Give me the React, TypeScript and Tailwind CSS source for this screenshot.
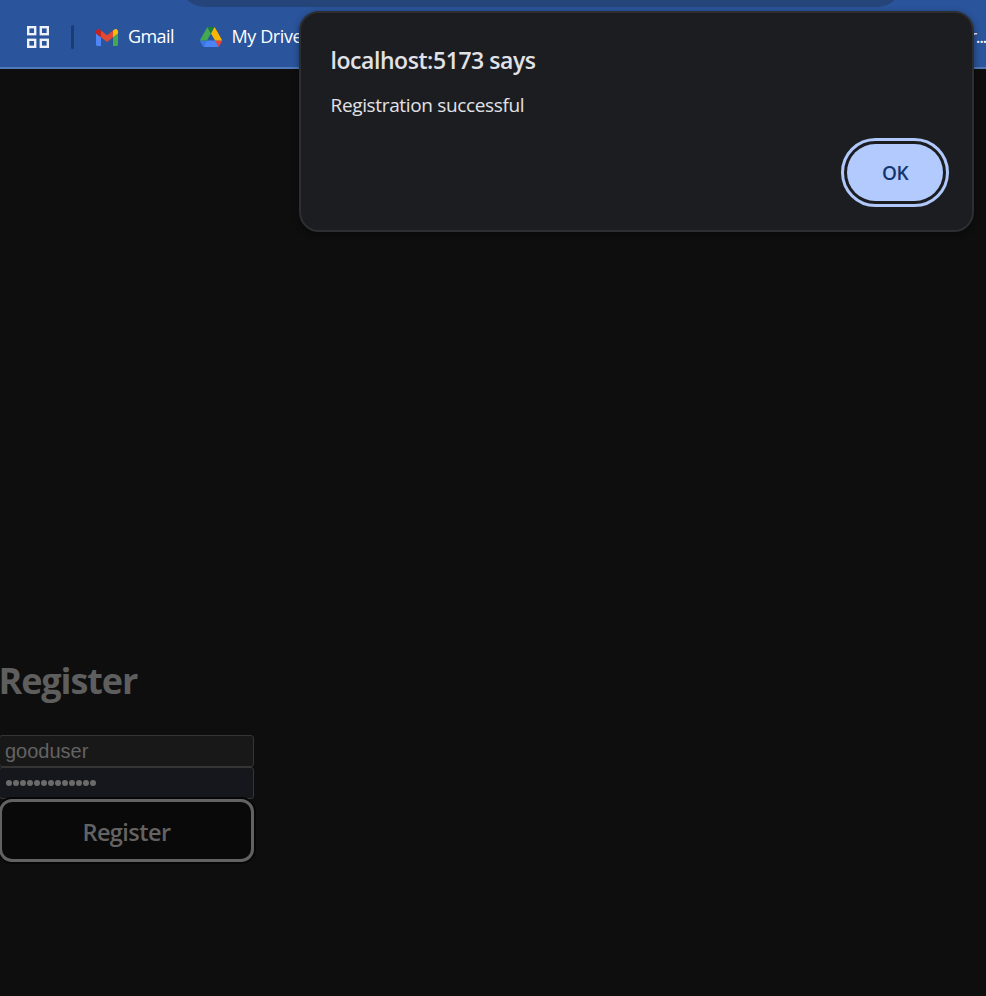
import React from "react";

function AppsIcon() {
  return (
    <svg width="22" height="22" viewBox="0 0 22 22" fill="none" stroke="#eef1f8" strokeWidth="2.4">
      <rect x="1.2" y="1.2" width="7" height="7" />
      <rect x="13.8" y="1.2" width="7" height="7" />
      <rect x="1.2" y="13.8" width="7" height="7" />
      <rect x="13.8" y="13.8" width="7" height="7" />
    </svg>
  );
}

function GmailIcon() {
  return (
    <svg width="22" height="17" viewBox="52 42 88 66" preserveAspectRatio="none">
      <path fill="#4f86f5" d="M58 108h14V74L52 59v43c0 3.32 2.69 6 6 6" />
      <path fill="#43a852" d="M120 108h14c3.32 0 6-2.69 6-6V59l-20 15" />
      <path fill="#fbbc04" d="M120 48v26l20-15v-8c0-7.42-8.47-11.65-14.4-7.2" />
      <path fill="#e04a35" d="M72 74V48l24 18 24-18v26L96 92" />
      <path fill="#c5221f" d="M52 51v8l20 15V48l-5.600-4.200c-5.940-4.450-14.400-.22-14.400 7.200" />
    </svg>
  );
}

function DriveIcon() {
  return (
    <svg width="22" height="20" viewBox="0 0 87.3 78" preserveAspectRatio="none">
      <path fill="#3878e8" d="m6.600 66.850 3.850 6.650c.8 1.400 1.950 2.500 3.300 3.300l13.750-23.800h-27.500c0 1.550.4 3.100 1.200 4.500z" />
      <path fill="#43a852" d="m43.650 25-13.750-23.800c-1.350.8-2.500 1.900-3.300 3.300l-25.400 44a9.060 9.060 0 0 0 -1.200 4.500h27.500z" />
      <path fill="#ea4335" d="m73.550 76.800c1.350-.8 2.500-1.900 3.300-3.300l1.600-2.750 7.650-13.250c.8-1.400 1.200-2.950 1.200-4.500h-27.502l5.852 11.500z" />
      <path fill="#188038" d="m43.650 25 13.750-23.800c-1.350-.8-2.900-1.200-4.500-1.200h-18.500c-1.600 0-3.150.45-4.500 1.200z" />
      <path fill="#4b84f5" d="m59.800 53h-32.300l-13.750 23.800c1.350.8 2.900 1.200 4.500 1.200h50.800c1.600 0 3.150-.45 4.500-1.200z" />
      <path fill="#fbb604" d="m73.400 26.500-12.700-22c-.8-1.400-1.950-2.500-3.300-3.300l-13.750 23.800 16.150 28h27.450c0-1.550-.4-3.100-1.200-4.500z" />
    </svg>
  );
}

function BookmarksBar() {
  return (
    <header className="relative h-[69px] overflow-hidden border-b-2 border-[#4f78b8] bg-[#2a549b]">
      <div className="absolute -top-[45px] left-[179px] h-[52px] w-[724px] rounded-full bg-[#254479]" />
      <div className="flex h-[74px] items-center pl-[27px] text-[18px] text-white">
        <AppsIcon />
        <div className="ml-[22px] h-6 w-[3px] rounded-full bg-[#1d3b70]" />
        <div className="ml-[22px] flex items-center">
          <GmailIcon />
          <span className="ml-[10px] w-[72px] whitespace-nowrap pb-[2px] tracking-[-0.6px]">Gmail</span>
        </div>
        <div className="flex items-center">
          <DriveIcon />
          <span className="ml-[9.5px] whitespace-nowrap pb-[2px] tracking-[-0.4px]">My Drive</span>
        </div>
        <span className="ml-auto whitespace-nowrap pb-[2px] tracking-[-1.3px]">r...</span>
      </div>
    </header>
  );
}

function AlertDialog() {
  return (
    <section
      role="alertdialog"
      className="absolute left-[299px] top-[11px] flex h-[221px] w-[675px] flex-col rounded-[20px] border-2 border-[#2d2e32] bg-[#1c1d20] pl-[29.5px] pr-[23px] text-[#e1e2e8] shadow-[0_2px_6px_rgba(0,0,0,0.4)]"
    >
      <h2 className="mt-[31px] whitespace-nowrap text-[23px] font-semibold leading-8 tracking-[-0.44px]">
        localhost:5173 says
      </h2>
      <p className="mt-[15px] whitespace-nowrap text-[19px] leading-7 tracking-[-0.35px]">Registration successful</p>
      <button className="mt-[19px] flex h-[69px] w-[108px] items-center justify-center self-end rounded-full border-[3px] border-[#b0c8fb] p-[3px]">
        <span className="flex h-full w-full items-center justify-center rounded-full bg-[#b2cafd] pt-px text-[19px] font-semibold tracking-[-0.6px] text-[#12366f]">
          OK
        </span>
      </button>
    </section>
  );
}

export default function App() {
  return (
    <div className="relative h-[996px] w-[986px] overflow-hidden bg-[#0e0e0e] font-['Open_Sans','Noto_Sans',sans-serif]">
      <BookmarksBar />
      <main className="pt-[587px] text-[#636363]">
        <h1 className="-ml-[1.5px] h-[79px] whitespace-nowrap text-[36px] font-bold leading-[50px] tracking-[-1.1px] text-[#5e5e5e]">
          Register
        </h1>
        <form className="-ml-px flex w-[255px] flex-col">
          <div className="flex h-8 items-center rounded-[3px] border border-[#353535] bg-[#181818] px-[5px] font-['Liberation_Sans',sans-serif] text-[20px]">
            gooduser
          </div>
          <div className="flex h-8 items-center gap-px rounded-[3px] border border-[#353535] bg-[#16171c] pb-px pl-[6px]">
            {Array.from({ length: 13 }, (_, i) => (
              <span key={i} className="size-[6px] rounded-full bg-[#6b6b6b]" />
            ))}
          </div>
          <div className="flex h-[63px] items-center justify-center rounded-[13px] border-[3px] border-[#626262] bg-[#090909] pt-[4px] text-[23.5px] font-semibold tracking-[-0.55px] shadow-[0_0_0_2px_#070707]">
            Register
          </div>
        </form>
      </main>
      <AlertDialog />
    </div>
  );
}
